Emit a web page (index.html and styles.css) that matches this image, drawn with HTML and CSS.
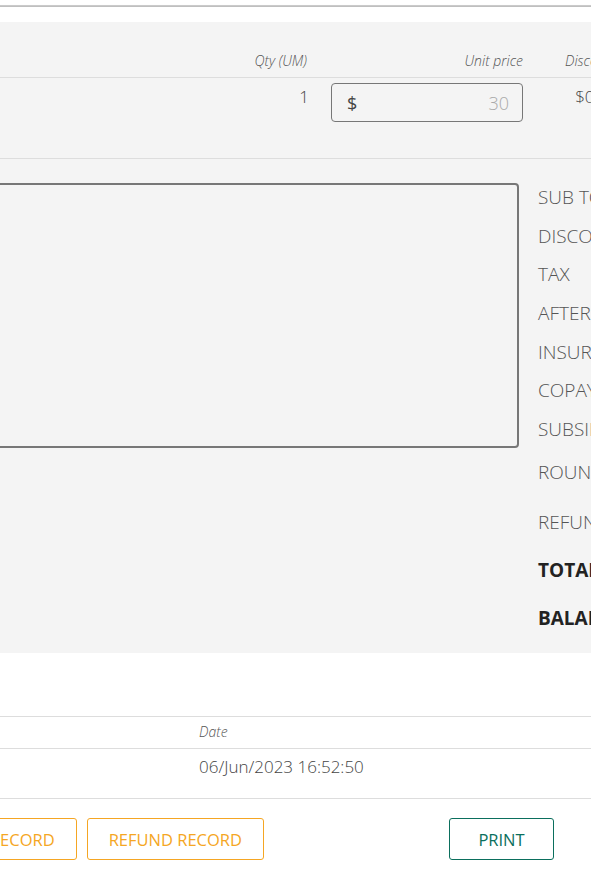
FILE: index.html
```html
<!DOCTYPE html>
<html lang="en">
<head>
    <meta charset="UTF-8">
    <meta name="viewport" content="width=device-width, initial-scale=1.0">
    <title>Invoice</title>
    <link rel="stylesheet" href="styles.css">
</head>
<body>
    <div class="top-rule"></div>
    <div class="invoice">
        <!-- 明細 -->
        <section class="items">
            <div class="item-row item-head">
                <div class="col-desc">Item</div>
                <div class="col-qty">Qty (UM)</div>
                <div class="col-price">Unit price</div>
                <div class="col-disc">Discount</div>
                <div class="col-amount">Amount</div>
            </div>
            <div class="item-row">
                <div class="col-desc">Consult</div>
                <div class="col-qty cell-text">1</div>
                <div class="col-price">
                    <label class="price-input">
                        <span class="currency">$</span>
                        <input type="text" value="30">
                    </label>
                </div>
                <div class="col-disc cell-text">$0.00</div>
                <div class="col-amount cell-text">$30.00</div>
            </div>

            <div class="summary">
                <textarea class="remarks"></textarea>
                <div class="totals">
                    <div class="total-row"><span>SUB TOTAL</span><span>$30.00</span></div>
                    <div class="total-row"><span>DISCOUNT</span><span>$0.00</span></div>
                    <div class="total-row"><span>TAX</span><span>$0.00</span></div>
                    <div class="total-row"><span>AFTER TAX</span><span>$30.00</span></div>
                    <div class="total-row"><span>INSURANCE</span><span>$0.00</span></div>
                    <div class="total-row"><span>COPAY</span><span>$0.00</span></div>
                    <div class="total-row"><span>SUBSIDY</span><span>$0.00</span></div>
                    <div class="total-row rounding"><span>ROUNDING</span><span>$0.00</span></div>
                    <div class="total-row refund"><span>REFUND</span><span>$0.00</span></div>
                    <div class="total-row grand"><span>TOTAL</span><span>$30.00</span></div>
                    <div class="total-row grand last"><span>BALANCE</span><span>$0.00</span></div>
                </div>
            </div>
        </section>

        <!-- 支払い記録 -->
        <section class="payments">
            <div class="pay-row pay-head">
                <div>Receipt</div>
                <div>Method</div>
                <div>Date</div>
                <div>Amount</div>
            </div>
            <div class="pay-row">
                <div>R-0012</div>
                <div>Cash</div>
                <div>06/Jun/2023 16:52:50</div>
                <div>$30.00</div>
            </div>
        </section>

        <div class="actions">
            <div class="actions-left">
                <button class="btn btn-orange">PAYMENT RECORD</button>
                <button class="btn btn-orange">REFUND RECORD</button>
            </div>
            <button class="btn btn-green btn-print">PRINT</button>
        </div>
    </div>
</body>
</html>
```

FILE: styles.css
```css
/* 全体 */
body {
    margin: 0;
    font-family: "Open Sans", "Liberation Sans", sans-serif;
    color: #444;
    background-color: #fff;
    overflow-x: hidden;
}

.top-rule {
    height: 2px;
    margin-top: 5px;
    background-color: #cfcfcf;
}

.invoice {
    width: 1400px;
    margin-left: -360px;
    padding-top: 15px;
    background-color: #fff;
    box-shadow: 0 1px 3px rgba(0, 0, 0, 0.45);
}

/* 明細 */
.items {
    background-color: #f4f4f4;
    padding: 0 24px;
}

.item-row {
    display: grid;
    grid-template-columns: 540px 79px 192px 71px 1fr;
    column-gap: 24px;
    align-items: start;
    padding: 5px 0 36px;
    border-bottom: 1px solid #ddd;
}

.item-head {
    padding: 31px 0 8px;
    font-size: 14px;
    line-height: 16px;
    font-style: italic;
    font-weight: 300;
    color: #555;
}

.col-qty,
.col-price,
.col-disc {
    text-align: right;
}

.cell-text {
    padding-top: 3px;
    font-size: 17px;
    line-height: 22px;
    font-weight: 300;
}

.col-qty.cell-text {
    margin-right: -2px;
}

.price-input {
    display: flex;
    align-items: center;
    box-sizing: border-box;
    height: 39px;
    padding: 0 13px 0 15px;
    border: 1px solid #777;
    border-radius: 4px;
}

.currency {
    font-size: 18px;
    color: #444;
}

.price-input input {
    flex: 1;
    min-width: 0;
    border: none;
    background: transparent;
    text-align: right;
    font-family: inherit;
    font-size: 18px;
    font-weight: 300;
    color: #aaa;
    padding: 0;
    outline: none;
}

/* 合計 */
.summary {
    display: flex;
    gap: 19px;
    padding-top: 24px;
}

.remarks {
    flex: 1;
    height: 265px;
    box-sizing: border-box;
    border: 2px solid #777;
    border-radius: 4px;
    background: transparent;
    resize: none;
}

.totals {
    flex: 0 0 478px;
    margin-top: 2px;
}

.total-row {
    display: flex;
    justify-content: space-between;
    height: 38.67px;
    font-size: 19px;
    line-height: 24px;
    font-weight: 300;
    color: #555;
}

.total-row.rounding {
    margin-top: 4.5px;
    height: 50px;
}

.total-row.refund {
    height: 48px;
}

.total-row.grand {
    height: 48px;
    font-weight: 700;
    color: #222;
}

.total-row.last {
    height: 47px;
}

/* 支払い記録 */
.payments {
    padding: 63px 24px 0;
}

.pay-row {
    display: grid;
    grid-template-columns: 250px 285px 400px 1fr;
    padding: 7px 0 20px;
    font-size: 17px;
    line-height: 22px;
    font-weight: 300;
    border-bottom: 1px solid #ddd;
}

.pay-head {
    padding: 7px 0 8px;
    border-top: 1px solid #ddd;
    font-size: 14px;
    line-height: 16px;
    font-style: italic;
    color: #555;
}

/* ボタン */
.actions {
    display: flex;
    padding: 19px 24px 20px;
}

.actions-left {
    flex: 0 0 600px;
    display: flex;
    justify-content: flex-end;
    gap: 10px;
}

.btn {
    height: 42px;
    padding: 0 21px;
    background: transparent;
    border: 1px solid;
    border-radius: 3px;
    font-family: inherit;
    font-size: 16.5px;
    cursor: pointer;
}

.btn-orange {
    color: #f5a623;
    border-color: #f5a623;
}

.btn-green {
    color: #0b6f5d;
    border-color: #0b6f5d;
}

.btn-print {
    width: 105px;
    margin-left: 185px;
}
```
